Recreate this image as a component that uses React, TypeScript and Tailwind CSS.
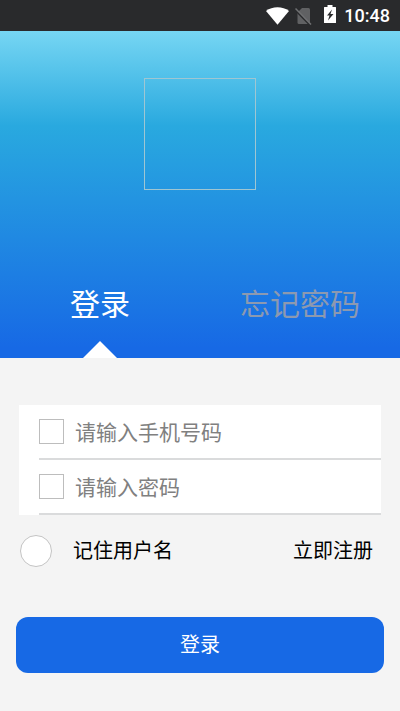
import { useState } from 'react'

type Tab = 'login' | 'forgot'

const tabs: { id: Tab; label: string }[] = [
  { id: 'login', label: '登录' },
  { id: 'forgot', label: '忘记密码' },
]

const fields = [
  { id: 'phone', type: 'tel', placeholder: '请输入手机号码' },
  { id: 'password', type: 'password', placeholder: '请输入密码' },
]

function StatusBar() {
  return (
    <div className="flex h-[31px] items-center justify-end bg-[#292a2c] pr-[10px] text-white">
      <svg className="mr-[6px] h-[18px] w-[24px]" viewBox="0 0 24 18" fill="currentColor">
        <path d="M12.500 17.800 1 4C4.200 1.400 8.300 0.200 12.500 0.200s8.300 1.200 11.500 3.800z" />
      </svg>
      <svg className="mr-[11px] h-[18px] w-[17px]" viewBox="0 0 17 18">
        <path d="M7 1H13.500q1.500 0 1.500 1.500v13q0 1.500-1.500 1.500H4q-1.500 0-1.500-1.500V5.500z" fill="#606163" />
        <path d="M0 2.500 15.500 18.500" stroke="#292a2c" strokeWidth="2" />
        <path d="M0.500 1.500 16 17.500" stroke="#707173" strokeWidth="1.500" />
      </svg>
      <svg className="mr-[7px] mb-[3px] h-[18px] w-[14px]" viewBox="0 0 14 18">
        <path d="M4.500 0h5v2h3q0.500 0 0.500 0.500v15q0 0.500-0.500 0.500h-11q-0.500 0-0.500-0.500v-15q0-0.500 0.500-0.500h3z" fill="currentColor" />
        <path d="M9 4.500 4 10.500h2.500L5 15.500l5.500-6.500H7.500z" fill="#292a2c" />
      </svg>
      <span className="font-['Roboto',sans-serif] text-[18px] leading-[20px] font-medium">10:48</span>
    </div>
  )
}

export default function App() {
  const [tab, setTab] = useState<Tab>('login')
  const [remember, setRemember] = useState(false)

  return (
    <div className="min-h-screen bg-[#f4f4f4] font-['Noto_Sans_CJK_SC',sans-serif] text-black">
      <StatusBar />

      <header className="bg-[linear-gradient(180deg,#76d6f3_0%,#29a9df_29%,#1769e5_97%)] pt-[47px]">
        {/* Logo */}
        <div className="mx-auto size-[112px] border border-[#9fc6d2]" />

        <nav className="mt-[90px] grid grid-cols-2">
          {tabs.map((t) => (
            <button
              key={t.id}
              onClick={() => setTab(t.id)}
              className={`flex flex-col items-center text-[30px] leading-[44px] ${
                tab === t.id ? 'text-white' : 'text-[#8c99b0]'
              }`}
            >
              {t.label}
              <svg
                className={`mt-[17px] h-[17px] w-[34px] ${tab === t.id ? '' : 'invisible'}`}
                viewBox="0 0 34 17"
                fill="white"
              >
                <path d="M17 0 34 17H0z" />
              </svg>
            </button>
          ))}
        </nav>
      </header>

      <form className="pt-[47px]" onSubmit={(e) => e.preventDefault()}>
        <div className="mx-[19px] bg-white pl-[20px]">
          {fields.map((f) => (
            <div key={f.id} className="flex h-[55px] items-center border-b-2 border-[#dadbdc]">
              <span className="mr-[11px] size-[25px] shrink-0 border border-[#bdbdbd]" />
              <input
                id={f.id}
                type={f.type}
                aria-label={f.placeholder}
                placeholder={f.placeholder}
                className="h-[32px] min-w-0 flex-1 pb-[2px] text-[21px] outline-none placeholder:text-[#808080]"
              />
            </div>
          ))}
        </div>

        <div className="mt-[20px] flex items-center justify-between pr-[27px] pl-[20px] text-[20px] leading-[30px]">
          <label className="flex items-center">
            <input
              type="checkbox"
              checked={remember}
              onChange={(e) => setRemember(e.target.checked)}
              className="mr-[21px] size-[32px] appearance-none rounded-full border border-[#c4c4c4] bg-white checked:bg-[#1769e5]"
            />
            <span className="pb-[2px]">记住用户名</span>
          </label>
          <a href="#register" className="pb-[2px]">
            立即注册
          </a>
        </div>

        <div className="px-4 pt-[50px]">
          <button type="submit" className="h-14 w-full rounded-xl bg-[#1769e5] pb-[2px] text-[20px] text-white">
            登录
          </button>
        </div>
      </form>
    </div>
  )
}
